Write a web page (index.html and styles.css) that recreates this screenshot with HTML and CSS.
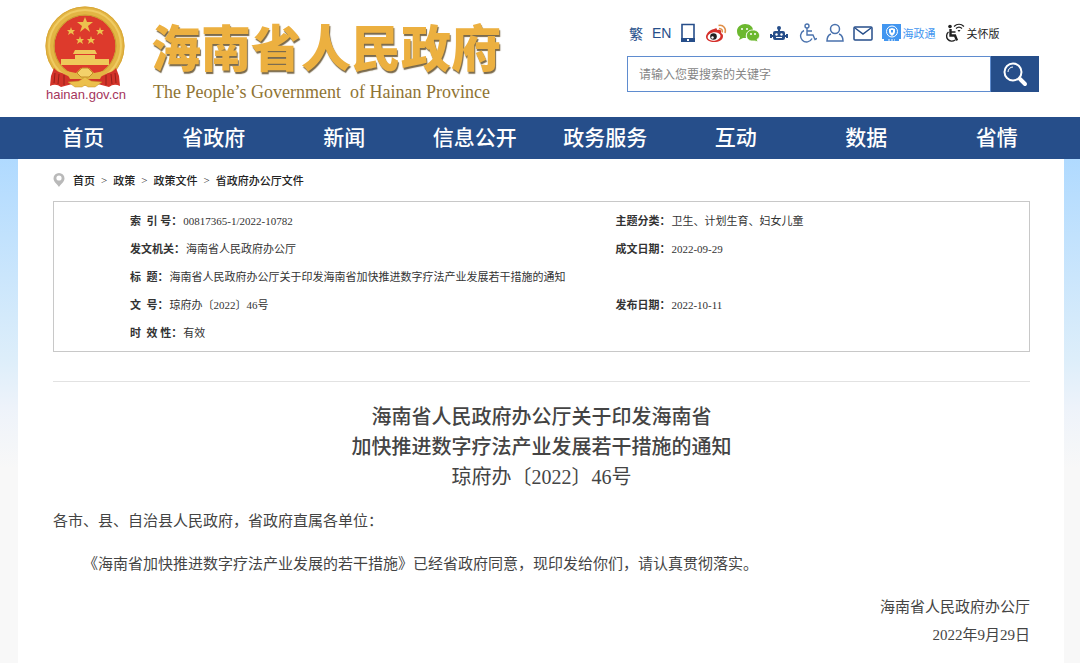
FILE: index.html
```html
<!DOCTYPE html>
<html lang="zh-CN">
<head>
  <meta charset="UTF-8" />
  <title>海南省人民政府办公厅文件</title>
  <link rel="stylesheet" href="styles.css">
</head>
<body>
  <!-- Header -->
  <header class="header">
    <div class="brand">
      <a href="#" class="emblem">
        <svg width="84" height="82" viewBox="0 0 84 82">
          <circle cx="41" cy="40" r="35" fill="#dd3a2c" stroke="#e3b544" stroke-width="9"/>
          <circle cx="41" cy="40" r="39" fill="none" stroke="#d9a838" stroke-width="1"/>
          <circle cx="41" cy="40" r="36" fill="none" stroke="#efcb62" stroke-width="2"/>
          <circle cx="41" cy="40" r="31" fill="none" stroke="#c99a30" stroke-width="1"/>
          <path d="M10 62 Q13 66 18 67 L28 72 L54 72 L64 67 Q69 66 72 62 L75 70 L76 80 Q70 77 65 81 L50 77 L41 79 L32 77 L17 81 Q12 77 6 80 L7 70 Z" fill="#d23329"/>
          <path d="M11 67 L10 77 M15 68 L14 78 M20 69 L20 79 M71 67 L72 77 M67 68 L68 78 M62 69 L62 79" stroke="#96201a" stroke-width="1"/>
          <path d="M41 11 L43 16 L49 16 L44 20 L46 26 L41 22 L36 26 L38 20 L33 16 L39 16 Z" fill="#ecc24e"/>
          <path d="M27 21 l1 3 h3 l-2 2 1 3 -3 -2 -3 2 1 -3 -2 -2 h3z M56 21 l1 3 h3 l-2 2 1 3 -3 -2 -3 2 1 -3 -2 -2 h3z M36 30 l1 3 h3 l-2 2 1 3 -3 -2 -3 2 1 -3 -2 -2 h3z M47 30 l1 3 h3 l-2 2 1 3 -3 -2 -3 2 1 -3 -2 -2 h3z" fill="#ecc24e"/>
          <path d="M31 44 H51 L53 48 H29 Z M31 49 H51 V53 H53 V57 H29 V53 H31 Z M17 53 H29 V57 H53 V53 H65 V59 H17 Z" fill="#efc85a"/>
          <path d="M22 65 L32 67 L37 62 H45 L50 67 L60 65 L56 73 H26 Z" fill="#e3b544"/>
          <path d="M33 67 L38 62 H44 L49 67 L45 71 H37 Z" fill="#f3d16a" stroke="#c48f26"/>
          <path d="M24 76 L35 75 L41 71 L47 75 L58 76 L51 81 H44 L41 79 L38 81 H31 Z" fill="#ecc04c" stroke="#c48f26" stroke-width=".5"/>
        </svg>
        <span>hainan.gov.cn</span>
      </a>
      <div class="site-name">
        <h1>海南省人民政府</h1>
        <p>The People’s Government  of Hainan Province</p>
      </div>
    </div>

    <div class="tools">
      <div class="tool-links">
        <a href="#" class="lang">繁</a>
        <a href="#" class="lang">EN</a>
        <a href="#" aria-label="移动端">
          <svg width="16" height="20" viewBox="0 0 16 20"><path d="M2 1.500h12v16H2z" fill="none" stroke="#264e8a" stroke-width="1.600"/><path d="M1 15h14v4H1z" fill="#264e8a"/><path d="M7 16h2v2H7z" fill="#fff"/></svg>
        </a>
        <a href="#" aria-label="微博">
          <svg width="22" height="20" viewBox="0 0 22 20"><path d="M9 6C4 7 1 11 1 14c0 3 4 5 8 5 5 0 9-2 9-6 0-2-1-2-2-3 1-3-1-4-4-3 0-2-1-2-3-1z" fill="#d52f2a"/><ellipse cx="9" cy="13.500" rx="6.500" ry="4.200" fill="#fff" transform="rotate(-8 9 13)"/><circle cx="8.500" cy="13.500" r="3.300" fill="#222"/><circle cx="7.500" cy="14.500" r="1.200" fill="#fff"/><path d="M14 5.500c3 0 4 2 3 4M13.500 2.500c5-1 8 3 6.500 7.500" fill="none" stroke="#e0904a" stroke-width="1.500"/></svg>
        </a>
        <a href="#" aria-label="微信">
          <svg width="24" height="20" viewBox="0 0 24 20"><path d="M9 1c5 0 8 3 8 6-5 0-8 3-7 8H7l-4 2 1-3C2 13 1 11 1 8c0-4 4-7 8-7z" fill="#6cb82f"/><path d="M17 7c4 0 6.500 2.500 6.500 5.500 0 2-1 3-2.500 4l1 2.500-3-1h-2c-4 0-6.500-2-6.500-5.500S13 7 17 7z" fill="#6cb82f" stroke="#fff" stroke-width=".8"/><g fill="#fff"><circle cx="6" cy="6" r="1"/><circle cx="11" cy="6" r="1"/><circle cx="15" cy="11" r="1"/><circle cx="19" cy="11" r="1"/></g></svg>
        </a>
        <a href="#" aria-label="智能问答">
          <svg width="20" height="18" viewBox="0 0 20 18"><path d="M9 4h2v3h3q2 0 2 2v5q0 2-2 2H6q-2 0-2-2V9q0-2 2-2h3z" fill="#264e8a"/><circle cx="10" cy="4" r="2" fill="#264e8a"/><path d="M1 10h2v4H1zM17 10h2v4h-2zM3 11h14v2H3z" fill="#264e8a"/><g fill="#fff"><circle cx="7.500" cy="10.500" r="1.200"/><circle cx="12.500" cy="10.500" r="1.200"/><path d="M7 13h6v1H7z"/></g></svg>
        </a>
        <a href="#" aria-label="无障碍">
          <svg width="19" height="20" viewBox="0 0 19 20" fill="none" stroke="#4a72ad" stroke-width="1.400"><circle cx="9" cy="3" r="2"/><path d="M9 5v7h6l2 4.500 2-1M9 8h5M6 7.500a6 6 0 1 0 8 8"/></svg>
        </a>
        <a href="#" aria-label="个人中心">
          <svg width="18" height="20" viewBox="0 0 18 20" fill="none" stroke="#4a72ad" stroke-width="1.500"><circle cx="9" cy="6" r="4.500"/><path d="M5 11c-3 1-4 4-4 7h16c0-3-1-6-4-7"/></svg>
        </a>
        <a href="#" aria-label="邮箱">
          <svg width="20" height="16" viewBox="0 0 20 16" fill="none" stroke="#264e8a" stroke-width="1.500"><rect x="1" y="2" width="18" height="13" rx="1"/><path d="M2 3l8 6 8-6"/></svg>
        </a>
        <a href="#" class="hzt">
          <svg width="19" height="19" viewBox="0 0 19 19"><path d="M0 0h19v15h-2v2H2v-2H0z" fill="#4296f0"/><circle cx="10" cy="7.500" r="5.500" fill="none" stroke="#fff"/><path d="M10 4l3 1v3q0 2-3 4-3-2-3-4V5z" fill="#fff"/><path d="M9 6h2v2l-1 1-1-1z" fill="#4296f0"/><path d="M6 16h7" stroke="#fff" stroke-dasharray="2 1"/></svg>
          <span>海政通</span>
        </a>
        <a href="#" class="care">
          <svg width="21" height="20" viewBox="0 0 21 20" fill="none" stroke="#222" stroke-width="1.400"><circle cx="6" cy="3.500" r="1.800" fill="#222" stroke="none"/><path d="M6.500 6v6.500h4.500l2 5" stroke-width="2.400"/><path d="M7 9h4.500M4.500 9a5 5 0 1 0 6.500 8"/><path d="M10 3.500c3-3 7-3 10 0M12 5.500c2-2 4-2 6 0" stroke-width="1.200"/><path d="M13.500 7h3l-1.500 2z" fill="#222" stroke="none"/></svg>
          <span>关怀版</span>
        </a>
      </div>
      <form class="search">
        <input type="text" aria-label="搜索" placeholder="请输入您要搜索的关键字" />
        <button type="button" aria-label="搜索">
          <svg width="26" height="26" viewBox="0 0 26 26" fill="none" stroke="#fff"><circle cx="11" cy="11" r="8.500" stroke-width="2"/><path d="M6 11a5 5 0 0 1 5-5"/><path d="M18 18l5 5" stroke-width="4" stroke-linecap="round"/></svg>
        </button>
      </form>
    </div>
  </header>

  <!-- Main menu -->
  <nav class="nav">
    <a href="#">首页</a>
    <a href="#">省政府</a>
    <a href="#">新闻</a>
    <a href="#">信息公开</a>
    <a href="#">政务服务</a>
    <a href="#">互动</a>
    <a href="#">数据</a>
    <a href="#">省情</a>
  </nav>

  <div class="page">
    <main class="content">
      <div class="crumbs">
        <svg width="12" height="14" viewBox="0 0 12 14"><path d="M6 0a5.500 5.500 0 0 1 5.500 5.500C11.500 9 7 12 6 14 5 12 .5 9 .5 5.500A5.500 5.500 0 0 1 6 0z" fill="#b9b9b9"/><circle cx="6" cy="5" r="2.600" fill="#fff"/></svg>
        <a href="#">首页</a><span>&gt;</span>
        <a href="#">政策</a><span>&gt;</span>
        <a href="#">政策文件</a><span>&gt;</span>
        <a href="#">省政府办公厅文件</a>
      </div>

      <div class="info">
        <table>
          <tr>
            <td><b>索&nbsp; 引 号：</b>00817365-1/2022-10782</td>
            <td><b>主题分类：</b>卫生、计划生育、妇女儿童</td>
          </tr>
          <tr>
            <td><b>发文机关：</b>海南省人民政府办公厅</td>
            <td><b>成文日期：</b>2022-09-29</td>
          </tr>
          <tr>
            <td colspan="2"><b>标&nbsp; 题：</b>海南省人民政府办公厅关于印发海南省加快推进数字疗法产业发展若干措施的通知</td>
          </tr>
          <tr>
            <td><b>文&nbsp; 号：</b>琼府办〔2022〕46号</td>
            <td><b>发布日期：</b>2022-10-11</td>
          </tr>
          <tr>
            <td colspan="2"><b>时&nbsp; 效 性：</b>有效</td>
          </tr>
        </table>
      </div>

      <article class="article">
        <h2>海南省人民政府办公厅关于印发海南省<br>加快推进数字疗法产业发展若干措施的通知<br><span>琼府办〔2022〕46号</span></h2>
        <p>各市、县、自治县人民政府，省政府直属各单位：</p>
        <p class="indent">《海南省加快推进数字疗法产业发展的若干措施》已经省政府同意，现印发给你们，请认真贯彻落实。</p>
        <div class="sign">海南省人民政府办公厅<br>2022年9月29日</div>
      </article>
    </main>
  </div>
</body>
</html>
```
FILE: styles.css
```css
* { box-sizing: border-box; }
body { margin: 0; background: #fff; color: #333; font-family: "Liberation Serif", "Noto Sans CJK SC", serif; }
a { color: inherit; text-decoration: none; }
svg { display: block; flex: none; }

/* header */
.header { display: flex; justify-content: space-between; padding: 6px 41px 15px 44px; }
.brand { display: flex; gap: 23px; }
.emblem { display: flex; flex-direction: column; align-items: center; font: 13px/13px "Liberation Sans", sans-serif; color: #a5355c; }
.site-name { padding-top: 12px; }
.site-name h1 { margin: 0; font: 900 50px/54px "Noto Sans CJK SC", sans-serif; color: #ecb040; text-shadow: 1px 2px 1px #7a6a4c; }
.site-name p { margin: 10px 0 0 2px; font-size: 18px; line-height: 20px; color: #8f7434; white-space: pre; }

.tools { width: 412px; font-family: "Liberation Sans", "Noto Sans CJK SC", sans-serif; }
.tool-links { display: flex; align-items: center; gap: 9px; height: 24px; margin: 15px 0 0 2px; font-size: 11px; white-space: nowrap; }
.lang { font-size: 14px; color: #264e8a; }
.hzt, .care { display: flex; align-items: center; gap: 1px; }
.hzt { color: #4296f0; }
.care { color: #222; }
.search { display: flex; height: 36px; margin-top: 11px; }
.search input { flex: 1; min-width: 0; padding: 0 11px 2px; border: 1px solid #5f8ccf; font: 12px "Noto Sans CJK SC", sans-serif; }
.search input::placeholder { color: #858585; }
.search button { display: flex; align-items: center; justify-content: center; width: 48px; padding: 0; border: 0; background: #264e8a; }

/* menu */
.nav { display: grid; grid-template-columns: repeat(8, 1fr); padding: 0 18px 4px; background: #264e8a; color: #fff; font: 500 21px/38px "Noto Sans CJK SC", sans-serif; text-align: center; }

/* page */
.page { padding: 0 16px 0 18px; background: linear-gradient(#b0daff, #ddeefa 200px, #eef3fa 250px, #f8f8f8 310px); }
.content { min-height: 504px; padding: 11px 34px 14px 35px; background: #fff; }
.crumbs { display: flex; align-items: center; height: 20px; font-size: 11px; font-weight: 500; color: #222; }
.crumbs svg { margin-right: 8px; }
.crumbs span { margin: 0 6px; }

.info { margin-top: 11px; padding: 5px 0 4px 76px; border: 1px solid #c8c8c8; }
.info table { width: 100%; border-collapse: collapse; table-layout: fixed; }
.info td { height: 28px; padding: 0; font-size: 11px; line-height: 16px; }
.info td:first-child { width: 54%; }
.info b { margin-right: 1px; font-weight: 700; }

.article { margin-top: 29px; padding-top: 20px; border-top: 1px solid #e2e2e2; color: #444; font-size: 15px; line-height: 28px; }
.article h2 { margin: 0; font-size: 20px; line-height: 30px; font-weight: 500; text-align: center; }
.article h2 span { font-weight: 400; }
.article p { margin: 15px 0; }
.article .indent { text-indent: 2em; }
.sign { text-align: right; }
```
